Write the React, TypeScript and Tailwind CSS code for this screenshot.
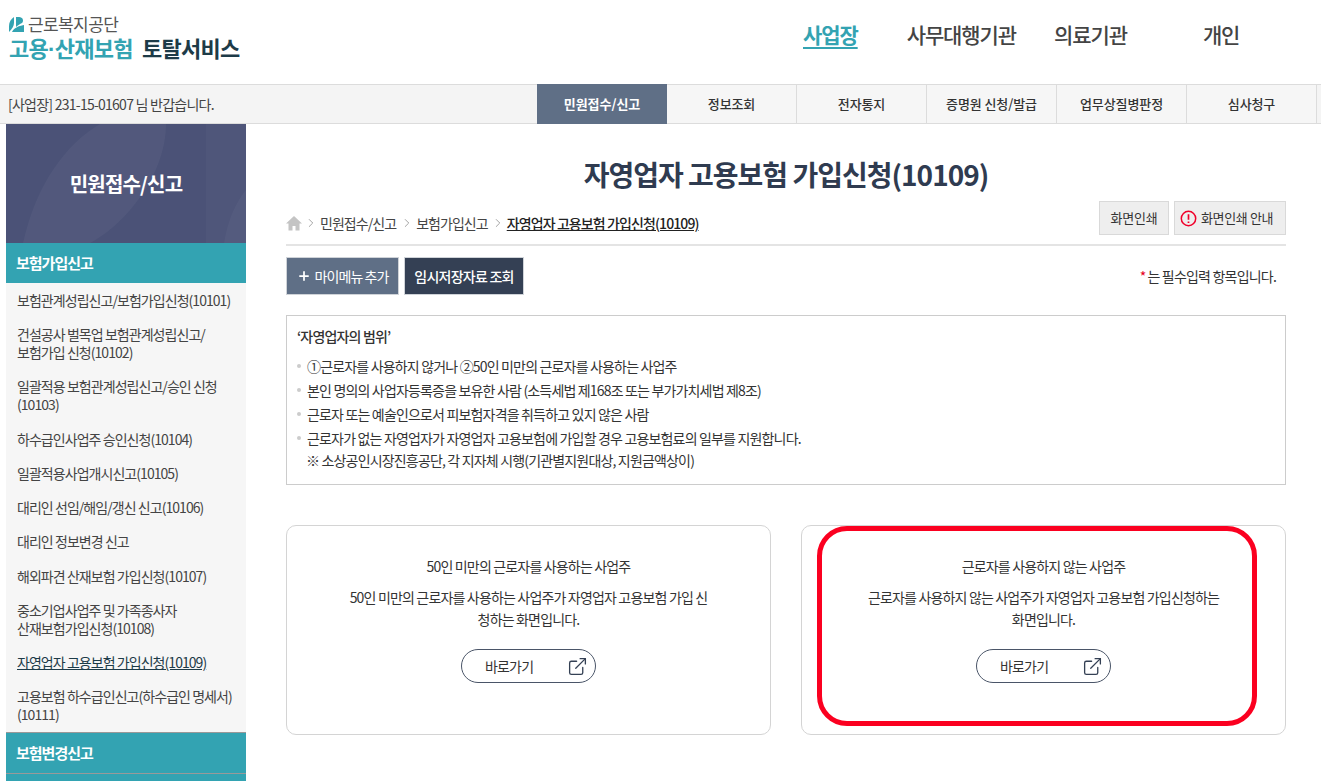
import { ChevronRight, ExternalLink, Plus } from 'lucide-react';

const tabs = ['민원접수/신고', '정보조회', '전자통지', '증명원 신청/발급', '업무상질병판정', '심사청구'];

const menu = [
  ['보험관계성립신고/보험가입신청(10101)'],
  ['건설공사 벌목업 보험관계성립신고/', '보험가입 신청(10102)'],
  ['일괄적용 보험관계성립신고/승인 신청', '(10103)'],
  ['하수급인사업주 승인신청(10104)'],
  ['일괄적용사업개시신고(10105)'],
  ['대리인 선임/해임/갱신 신고(10106)'],
  ['대리인 정보변경 신고'],
  ['해외파견 산재보험 가입신청(10107)'],
  ['중소기업사업주 및 가족종사자', '산재보험가입신청(10108)'],
  ['자영업자 고용보험 가입신청(10109)'],
  ['고용보험 하수급인신고(하수급인 명세서)', '(10111)'],
];

const notes = [
  '①근로자를 사용하지 않거나 ②50인 미만의 근로자를 사용하는 사업주',
  '본인 명의의 사업자등록증을 보유한 사람 (소득세법 제168조 또는 부가가치세법 제8조)',
  '근로자 또는 예술인으로서 피보험자격을 취득하고 있지 않은 사람',
  '근로자가 없는 자영업자가 자영업자 고용보험에 가입할 경우 고용보험료의 일부를 지원합니다.',
];

function Header() {
  return (
    <header className="flex h-[84px] items-start">
      <div className="ml-[9px] w-[780px] pt-[15px] font-['Liberation_Sans','Noto_Sans_CJK_KR',sans-serif]">
        <div className="flex h-[21px] items-center gap-[4px] text-[17px] leading-[21px] tracking-[-0.6px] text-[#555]">
          <svg width="15" height="15" viewBox="0 0 15 15" className="-mt-[3px] shrink-0">
            <path d="M0 9 C0 5 2 2 5 0 V6 C5 9 3 12 0 15Z" fill="#33a3b2" />
            <path d="M7 0 H10 C14 0 15 4 13 6 C11 7 9 8 7 10Z" fill="#33a3b2" />
            <path d="M3 15 C5 11 9 9 15 8 V15Z" fill="#33a3b2" />
          </svg>
          근로복지공단
        </div>
        <div className="mt-[1px] flex text-[22px] font-bold leading-[26px] tracking-[-0.7px] text-[#33a3b2]">
          <span>고용·산재보험</span>
          <span className="ml-[9px] text-[#1d3b48]">토탈서비스</span>
        </div>
      </div>
      <nav className="flex pt-[18px] text-[21px] font-medium leading-[32px] tracking-[-1.1px] text-[#444]">
        <a className="ml-[14px] font-bold text-[#33a3b2] underline underline-offset-4">사업장</a>
        <a className="ml-[49px]">사무대행기관</a>
        <a className="ml-[38px]">의료기관</a>
        <a className="ml-[76px]">개인</a>
      </nav>
    </header>
  );
}

function TopBar() {
  return (
    <div className="flex h-[40px] items-stretch border-y border-[#dcdcdc] bg-[#f4f4f4]">
      <p className="w-[537px] pl-[8px] text-[14px] leading-[38px] tracking-[-0.75px] text-[#444]">
        [사업장] 231-15-01607 님 반갑습니다.
      </p>
      {tabs.map((t, i) => (
        <div
          key={t}
          className={
            i === 0
              ? '-my-px flex w-[130px] items-center justify-center bg-[#5f6f86] text-[13px] font-bold tracking-[-0.05px] text-white'
              : 'flex w-[130px] items-center justify-center border-r border-[#dcdcdc] bg-[#f6f6f6] text-[13px] font-medium tracking-[-0.1px] text-[#333]'
          }
        >
          {t}
        </div>
      ))}
    </div>
  );
}

function Sidebar() {
  return (
    <aside className="ml-[6px] w-[240px] shrink-0">
      <div className="relative flex h-[119px] items-center justify-center overflow-hidden bg-[#4b5277]">
        <svg className="absolute inset-0" width="240" height="119" viewBox="0 0 240 119">
          <path d="M17 119 C30 60 60 20 94 0 H160 C160 50 120 100 84 119Z" fill="#ffffff" fillOpacity="0.04" />
          <path d="M200 0 H240 V119 H200Z" fill="#ffffff" fillOpacity="0.025" />
          <path d="M218 119 C222 95 230 78 240 66 V119Z" fill="#ffffff" fillOpacity="0.03" />
        </svg>
        <span className="relative text-[20px] font-bold tracking-[-0.8px] text-white">민원접수/신고</span>
      </div>
      <div className="h-[40px] bg-[#33a3b2] pl-[10px] text-[15px] font-bold leading-[40px] tracking-[-1px] text-white">
        보험가입신고
      </div>
      <ul className="border-b border-[#999] bg-[#f6f6f6]">
        {menu.map((lines, i) => (
          <li
            key={lines[0]}
            className={
              i === 9
                ? 'pb-[8.24px] pl-[11px] pt-[8px] text-[14px] leading-[18px] tracking-[-0.95px] text-[#1d3b48] underline'
                : 'pb-[8.24px] pl-[11px] pt-[8px] text-[14px] leading-[18px] tracking-[-0.95px] text-[#444]'
            }
          >
            {lines.map((l) => (
              <div key={l}>{l}</div>
            ))}
          </li>
        ))}
      </ul>
      <div className="h-[41px] border-b border-[#999] bg-[#33a3b2] pl-[10px] text-[15px] font-bold leading-[40px] tracking-[-1px] text-white">
        보험변경신고
      </div>
      <div className="h-[40px] bg-[#33a3b2]" />
    </aside>
  );
}

function Card({ title, lines }: { title: string; lines: string[] }) {
  return (
    <div className="flex h-[210px] w-[485px] flex-col items-center rounded-[10px] border border-[#d4d4d4] pt-[30px] text-center text-[14px] tracking-[-0.83px] text-[#333]">
      <p className="leading-[20px]">{title}</p>
      <p className="mt-[10px] leading-[22px]">
        {lines[0]}
        <br />
        {lines[1]}
      </p>
      <a className="mt-[19px] flex h-[34px] w-[135px] items-center justify-between rounded-full border border-[#4a5568] pl-[23px] pr-[7px]">
        바로가기
        <ExternalLink size={21} strokeWidth={1.5} className="text-[#344054]" />
      </a>
    </div>
  );
}

function Crumb() {
  return <ChevronRight size={14} strokeWidth={1.3} className="mx-[2px] text-[#888]" />;
}

export default function App() {
  return (
    <div className="relative h-[781px] overflow-hidden bg-white font-['Noto_Sans_CJK_KR','Noto_Sans',sans-serif]">
      <Header />
      <TopBar />
      <div className="flex">
        <Sidebar />
        <main className="ml-[40px] w-[1000px]">
          <h1 className="pt-[28px] text-center text-[28px] font-bold leading-[44px] tracking-[-1px] text-[#2f3b50]">
            자영업자 고용보험 가입신청(10109)
          </h1>
          <div className="flex h-[50px] items-start justify-between border-b-2 border-[#e4e4e4] pt-[5px]">
            <div className="flex items-center pt-[12px] text-[14px] leading-[20px] tracking-[-0.95px] text-[#444]">
              <svg width="16" height="16" viewBox="0 0 16 16">
                <path d="M8 1 L16 8.5 H13.5 V15.5 H9.5 V11 H6.5 V15.5 H2.5 V8.5 H0Z" fill="#c4c4c4" />
              </svg>
              <Crumb />
              <span>민원접수/신고</span>
              <span className="ml-[2px]">
                <Crumb />
              </span>
              <span>보험가입신고</span>
              <span className="ml-[1px]">
                <Crumb />
              </span>
              <span className="font-medium tracking-[-0.9px] text-[#222] underline">자영업자 고용보험 가입신청(10109)</span>
            </div>
            <div className="flex gap-[5px] text-[13px] tracking-[-0.25px] text-[#333]">
              <button className="h-[34px] w-[70px] border border-[#d9d9d9] bg-[#eeeeee]">화면인쇄</button>
              <button className="flex h-[34px] w-[112px] items-center gap-[4px] border border-[#d9d9d9] bg-[#eeeeee] pl-[5px] tracking-[-0.35px]">
                <svg width="17" height="17" viewBox="0 0 17 17">
                  <circle cx="8.5" cy="8.5" r="7.2" fill="none" stroke="#f0002a" strokeWidth="1.5" />
                  <path d="M8.5 4.2V9.8M8.5 11.4V13" stroke="#f0002a" strokeWidth="1.7" />
                </svg>
                화면인쇄 안내
              </button>
            </div>
          </div>
          <div className="mt-[11px] flex items-center justify-between">
            <div className="flex gap-[5px] text-[14px] tracking-[-0.75px] text-white">
              <button className="flex h-[38px] w-[113px] items-center justify-center gap-[4px] border border-[#cfd3d8] bg-[#5f6f86] tracking-[-0.95px]">
                <Plus size={14} strokeWidth={3} />
                마이메뉴 추가
              </button>
              <button className="h-[38px] w-[120px] border border-[#cfd3d8] bg-[#344054] font-medium">임시저장자료 조회</button>
            </div>
            <p className="pr-[10px] text-[14px] tracking-[-0.8px] text-[#333]">
              <span className="mr-[2px] text-[#e60023]">*</span>는 필수입력 항목입니다.
            </p>
          </div>
          <section className="mt-[20px] h-[170px] border border-[#cccccc] pl-[10px] pt-[9px] text-[14px] tracking-[-0.83px] text-[#333]">
            <p className="font-medium leading-[22px]">‘자영업자의 범위’</p>
            <ul className="mt-[7px]">
              {notes.map((n) => (
                <li key={n} className="flex h-[24px] items-center gap-[6px] leading-[24px]">
                  <span className="h-[4px] w-[4px] rounded-full bg-[#cccccc]" />
                  {n}
                </li>
              ))}
            </ul>
            <p className="pl-[9px] leading-[20px]">※ 소상공인시장진흥공단, 각 지자체 시행(기관별지원대상, 지원금액상이)</p>
          </section>
          <div className="mt-[40px] flex justify-between">
            <Card
              title="50인 미만의 근로자를 사용하는 사업주"
              lines={['50인 미만의 근로자를 사용하는 사업주가 자영업자 고용보험 가입 신', '청하는 화면입니다.']}
            />
            <Card
              title="근로자를 사용하지 않는 사업주"
              lines={['근로자를 사용하지 않는 사업주가 자영업자 고용보험 가입신청하는', '화면입니다.']}
            />
          </div>
        </main>
      </div>
      {/* red callout drawn over the second card */}
      <div className="absolute left-[817px] top-[526px] h-[200px] w-[440px] rounded-[30px] border-[5px] border-[#fb0020]" />
    </div>
  );
}
